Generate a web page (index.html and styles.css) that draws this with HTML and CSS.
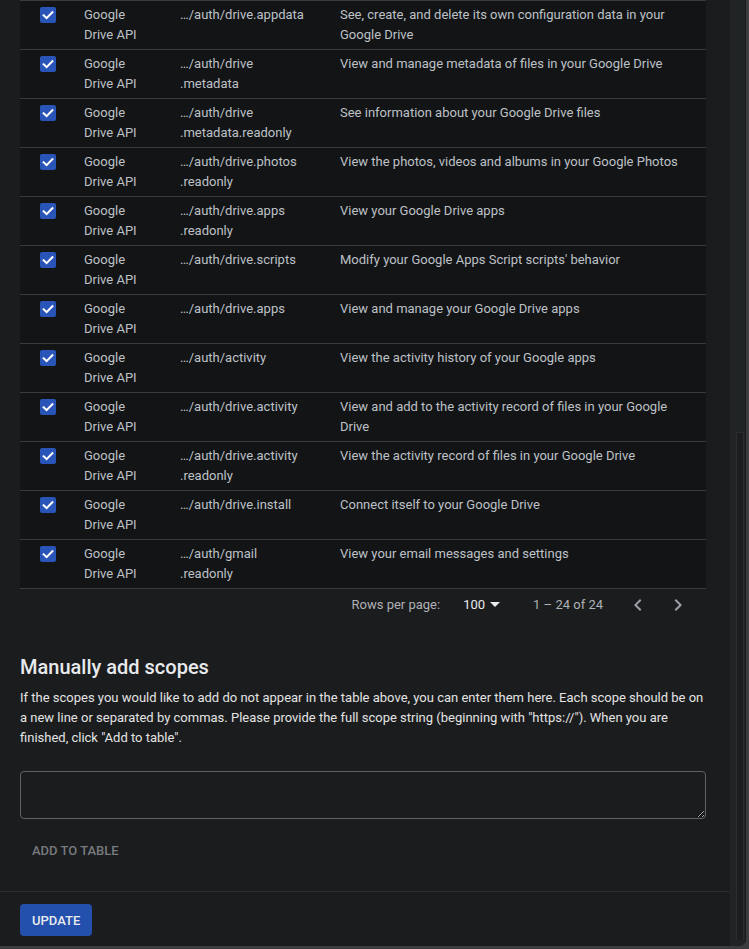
FILE: index.html
```html
<!DOCTYPE html>
<html lang="en">
<head>
<meta charset="utf-8">
<title>Update selected scopes</title>
<link rel="stylesheet" href="styles.css">
</head>
<body>
<div class="dialog">
  <div class="main">
    <div class="content">
      <div class="table">
        <div class="row"><div class="cb"><svg viewBox="0 0 16 16" width="16" height="16"><rect width="16" height="16" rx="2" class="box"/><polyline points="3.6,8.3 6.6,11.2 12.4,5.2" class="tick"/></svg></div><div class="api">Google Drive API</div><div class="scope">…/auth/drive<wbr>.appdata</div><div class="desc">See, create, and delete its own configuration data in your Google Drive</div></div>
        <div class="row"><div class="cb"><svg viewBox="0 0 16 16" width="16" height="16"><rect width="16" height="16" rx="2" class="box"/><polyline points="3.6,8.3 6.6,11.2 12.4,5.2" class="tick"/></svg></div><div class="api">Google Drive API</div><div class="scope">…/auth/drive<wbr>.metadata</div><div class="desc">View and manage metadata of files in your Google Drive</div></div>
        <div class="row"><div class="cb"><svg viewBox="0 0 16 16" width="16" height="16"><rect width="16" height="16" rx="2" class="box"/><polyline points="3.6,8.3 6.6,11.2 12.4,5.2" class="tick"/></svg></div><div class="api">Google Drive API</div><div class="scope">…/auth/drive<wbr>.metadata<wbr>.readonly</div><div class="desc">See information about your Google Drive files</div></div>
        <div class="row"><div class="cb"><svg viewBox="0 0 16 16" width="16" height="16"><rect width="16" height="16" rx="2" class="box"/><polyline points="3.6,8.3 6.6,11.2 12.4,5.2" class="tick"/></svg></div><div class="api">Google Drive API</div><div class="scope">…/auth/drive<wbr>.photos<wbr>.readonly</div><div class="desc">View the photos, videos and albums in your Google Photos</div></div>
        <div class="row"><div class="cb"><svg viewBox="0 0 16 16" width="16" height="16"><rect width="16" height="16" rx="2" class="box"/><polyline points="3.6,8.3 6.6,11.2 12.4,5.2" class="tick"/></svg></div><div class="api">Google Drive API</div><div class="scope">…/auth/drive<wbr>.apps<wbr>.readonly</div><div class="desc">View your Google Drive apps</div></div>
        <div class="row"><div class="cb"><svg viewBox="0 0 16 16" width="16" height="16"><rect width="16" height="16" rx="2" class="box"/><polyline points="3.6,8.3 6.6,11.2 12.4,5.2" class="tick"/></svg></div><div class="api">Google Drive API</div><div class="scope">…/auth/drive<wbr>.scripts</div><div class="desc">Modify your Google Apps Script scripts' behavior</div></div>
        <div class="row"><div class="cb"><svg viewBox="0 0 16 16" width="16" height="16"><rect width="16" height="16" rx="2" class="box"/><polyline points="3.6,8.3 6.6,11.2 12.4,5.2" class="tick"/></svg></div><div class="api">Google Drive API</div><div class="scope">…/auth/drive<wbr>.apps</div><div class="desc">View and manage your Google Drive apps</div></div>
        <div class="row"><div class="cb"><svg viewBox="0 0 16 16" width="16" height="16"><rect width="16" height="16" rx="2" class="box"/><polyline points="3.6,8.3 6.6,11.2 12.4,5.2" class="tick"/></svg></div><div class="api">Google Drive API</div><div class="scope">…/auth/activity</div><div class="desc">View the activity history of your Google apps</div></div>
        <div class="row"><div class="cb"><svg viewBox="0 0 16 16" width="16" height="16"><rect width="16" height="16" rx="2" class="box"/><polyline points="3.6,8.3 6.6,11.2 12.4,5.2" class="tick"/></svg></div><div class="api">Google Drive API</div><div class="scope">…/auth/drive<wbr>.activity</div><div class="desc">View and add to the activity record of files in your Google Drive</div></div>
        <div class="row"><div class="cb"><svg viewBox="0 0 16 16" width="16" height="16"><rect width="16" height="16" rx="2" class="box"/><polyline points="3.6,8.3 6.6,11.2 12.4,5.2" class="tick"/></svg></div><div class="api">Google Drive API</div><div class="scope">…/auth/drive<wbr>.activity<wbr>.readonly</div><div class="desc">View the activity record of files in your Google Drive</div></div>
        <div class="row"><div class="cb"><svg viewBox="0 0 16 16" width="16" height="16"><rect width="16" height="16" rx="2" class="box"/><polyline points="3.6,8.3 6.6,11.2 12.4,5.2" class="tick"/></svg></div><div class="api">Google Drive API</div><div class="scope">…/auth/drive<wbr>.install</div><div class="desc">Connect itself to your Google Drive</div></div>
        <div class="row last"><div class="cb"><svg viewBox="0 0 16 16" width="16" height="16"><rect width="16" height="16" rx="2" class="box"/><polyline points="3.6,8.3 6.6,11.2 12.4,5.2" class="tick"/></svg></div><div class="api">Google Drive API</div><div class="scope">…/auth/gmail<wbr>.readonly</div><div class="desc">View your email messages and settings</div></div>
      </div>

      <div class="pager">
        <span class="pager-label">Rows per page:</span>
        <span class="pager-select">100<svg width="10" height="5" viewBox="0 0 10 5"><path d="M0 0h10L5 5z" fill="#e8eaed"/></svg></span>
        <span class="pager-range">1 – 24 of 24</span>
        <span class="icon-btn"><svg width="24" height="24" viewBox="0 0 24 24"><path d="M15.41 7.41L14 6l-6 6 6 6 1.41-1.41L10.83 12z"/></svg></span>
        <span class="icon-btn"><svg width="24" height="24" viewBox="0 0 24 24"><path d="M10 6L8.59 7.41 13.17 12l-4.58 4.59L10 18l6-6z"/></svg></span>
      </div>

      <h2 class="title">Manually add scopes</h2>
      <p class="help">If the scopes you would like to add do not appear in the table above, you can enter them here. Each scope should be on a new line or separated by commas. Please provide the full scope string (beginning with "https://"). When you are finished, click "Add to table".</p>
      <textarea class="scopes-input" aria-label="Manually add scopes"></textarea>
      <div class="add-row"><button class="text-btn" disabled>Add to table</button></div>
    </div>
    <div class="footer">
      <button class="primary-btn">Update</button>
    </div>
  </div>
  <div class="scrollbar"><div class="thumb"></div></div>
</div>
</body>
</html>
```
FILE: styles.css
```css
* { box-sizing: border-box; }
html, body { margin: 0; padding: 0; }
body {
  background: #3c3d3f;
  width: 749px;
  height: 949px;
  overflow: hidden;
  font-family: Roboto, "Liberation Sans", Arial, sans-serif;
}
.dialog {
  width: 746px;
  height: 946px;
  display: flex;
  background: #1b1c1e;
  border-bottom-right-radius: 7px;
  overflow: hidden;
}
.main {
  width: 730px;
  display: flex;
  flex-direction: column;
}
.content {
  flex: 1;
  padding: 0 24px 0 20px;
}
.table {
  background: #131416;
  width: 686px;
}
.row {
  display: grid;
  grid-template-columns: 64px 96px 160px 366px;
  border-top: 1px solid #3a3b3d;
  padding: 4px 0;
  font-size: 13px;
  line-height: 20px;
  color: #bdc1c6;
  height: 49px;
}
.row.last { border-bottom: 1px solid #3a3b3d; height: 50px; }
.cb { padding: 2px 0 0 20px; }
.cb svg { display: block; }
.box { fill: #2a55b8; }
.tick { fill: none; stroke: #ffffff; stroke-width: 2; stroke-linecap: square; }
.api { padding-right: 30px; }
.scope { padding-right: 33px; }
.desc { padding-right: 21px; }

.pager {
  width: 686px;
  height: 31px;
  display: flex;
  align-items: center;
  justify-content: flex-end;
  padding-right: 8px;
  font-size: 13px;
  color: #aeb1b5;
}
.pager-label { margin-right: 23px; }
.pager-select {
  color: #e8eaed;
  display: flex;
  align-items: center;
  gap: 5px;
  margin-right: 33px;
}
.pager-range { margin-right: 15px; }
.icon-btn {
  width: 40px;
  height: 31px;
  display: flex;
  align-items: center;
  justify-content: center;
}
.icon-btn svg { fill: #9aa0a6; }

.title {
  margin: 33px 0 7px;
  font-size: 20px;
  line-height: 28px;
  font-weight: 500;
  color: #e8eaed;
}
.help {
  margin: 0;
  font-size: 13px;
  line-height: 20px;
  color: #e3e3e3;
}
.scopes-input {
  display: block;
  margin-top: 23px;
  width: 686px;
  height: 48px;
  background: #1b1c1e;
  border: 1px solid #5f6368;
  border-radius: 4px;
  color: #e8eaed;
  font: 13px Roboto, sans-serif;
  padding: 8px 12px;
}
.add-row { padding-top: 13px; }
.text-btn {
  background: none;
  border: none;
  padding: 0 12px;
  height: 36px;
  font-family: Roboto, sans-serif;
  font-size: 13px;
  font-weight: 500;
  color: #777a7e;
  text-transform: uppercase;
  letter-spacing: 0;
}

.footer {
  height: 55px;
  border-top: 1px solid #2b2c2e;
  padding: 12px 20px 0;
}
.primary-btn {
  height: 32px;
  padding: 0 12px;
  background: #2350ad;
  border: none;
  border-radius: 4px;
  color: #e8eaed;
  font-family: Roboto, sans-serif;
  font-size: 13px;
  font-weight: 500;
  text-transform: uppercase;
}

.scrollbar {
  width: 16px;
  background: #202425;
  position: relative;
  border-right: 1px solid #17191a;
}
.thumb {
  position: absolute;
  left: 6px;
  right: 1px;
  top: 432px;
  bottom: 6px;
  background: #1c1e20;
  border: 1px solid #2a2e30;
  border-bottom: none;
}
```
